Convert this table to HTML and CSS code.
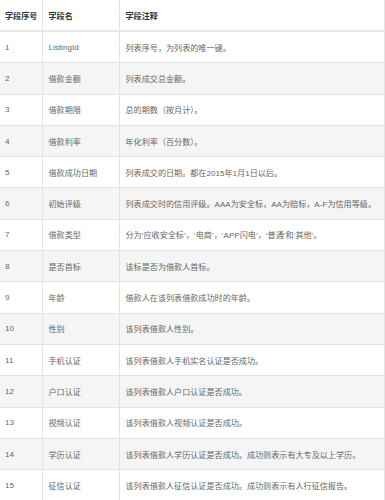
FILE: index.html
```html
<!DOCTYPE html>
<html lang="zh-CN">
<head>
<meta charset="utf-8">
<title>字段说明</title>
<link rel="stylesheet" href="styles.css">
</head>
<body>
<table class="fields">
  <colgroup>
    <col class="c-no">
    <col class="c-name">
    <col class="c-desc">
  </colgroup>
  <thead>
    <tr><th>字段序号</th><th>字段名</th><th>字段注释</th></tr>
  </thead>
  <tbody>
    <tr><td>1</td><td>ListingId</td><td>列表序号，为列表的唯一键。</td></tr>
    <tr><td>2</td><td>借款金额</td><td>列表成交总金额。</td></tr>
    <tr><td>3</td><td>借款期限</td><td>总的期数（按月计）。</td></tr>
    <tr><td>4</td><td>借款利率</td><td>年化利率（百分数）。</td></tr>
    <tr><td>5</td><td>借款成功日期</td><td>列表成交的日期。都在2015年1月1日以后。</td></tr>
    <tr><td>6</td><td>初始评级</td><td>列表成交时的信用评级。AAA为安全标，AA为赔标，A-F为信用等级。</td></tr>
    <tr><td>7</td><td>借款类型</td><td>分为‘应收安全标’，‘电商’，‘APP闪电’，‘普通’和‘其他’。</td></tr>
    <tr><td>8</td><td>是否首标</td><td>该标是否为借款人首标。</td></tr>
    <tr><td>9</td><td>年龄</td><td>借款人在该列表借款成功时的年龄。</td></tr>
    <tr><td>10</td><td>性别</td><td>该列表借款人性别。</td></tr>
    <tr><td>11</td><td>手机认证</td><td>该列表借款人手机实名认证是否成功。</td></tr>
    <tr><td>12</td><td>户口认证</td><td>该列表借款人户口认证是否成功。</td></tr>
    <tr><td>13</td><td>视频认证</td><td>该列表借款人视频认证是否成功。</td></tr>
    <tr><td>14</td><td>学历认证</td><td>该列表借款人学历认证是否成功。成功则表示有大专及以上学历。</td></tr>
    <tr><td>15</td><td>征信认证</td><td>该列表借款人征信认证是否成功。成功则表示有人行征信报告。</td></tr>
  </tbody>
</table>
</body>
</html>
```
FILE: styles.css
```css
html, body {
  margin: 0;
  padding: 0;
  background: #ffffff;
}

.fields {
  width: 384px;
  border-collapse: collapse;
  table-layout: fixed;
  font-family: "Liberation Sans", "Noto Sans CJK SC", sans-serif;
  font-size: 8.1px;
  color: #666666;
}

.c-no { width: 42px; }
.c-name { width: 77px; }
.c-desc { width: 265px; }

.fields th,
.fields td {
  text-align: left;
  vertical-align: middle;
  padding: 0 0 0 5px;
  border-right: 1px solid #e4e4e4;
  border-bottom: 1px solid #e4e4e4;
  white-space: nowrap;
  overflow: hidden;
}

.fields th {
  height: 30px;
  font-weight: bold;
  color: #333333;
  border-bottom: 2px solid #e8e8e8;
}

.fields td {
  height: 30.3px;
}

.fields td:nth-child(2),
.fields th:nth-child(2),
.fields td:nth-child(3),
.fields th:nth-child(3) {
  padding-left: 6px;
}

.fields tbody tr:nth-child(even) td {
  background: #f5f5f5;
}
```
